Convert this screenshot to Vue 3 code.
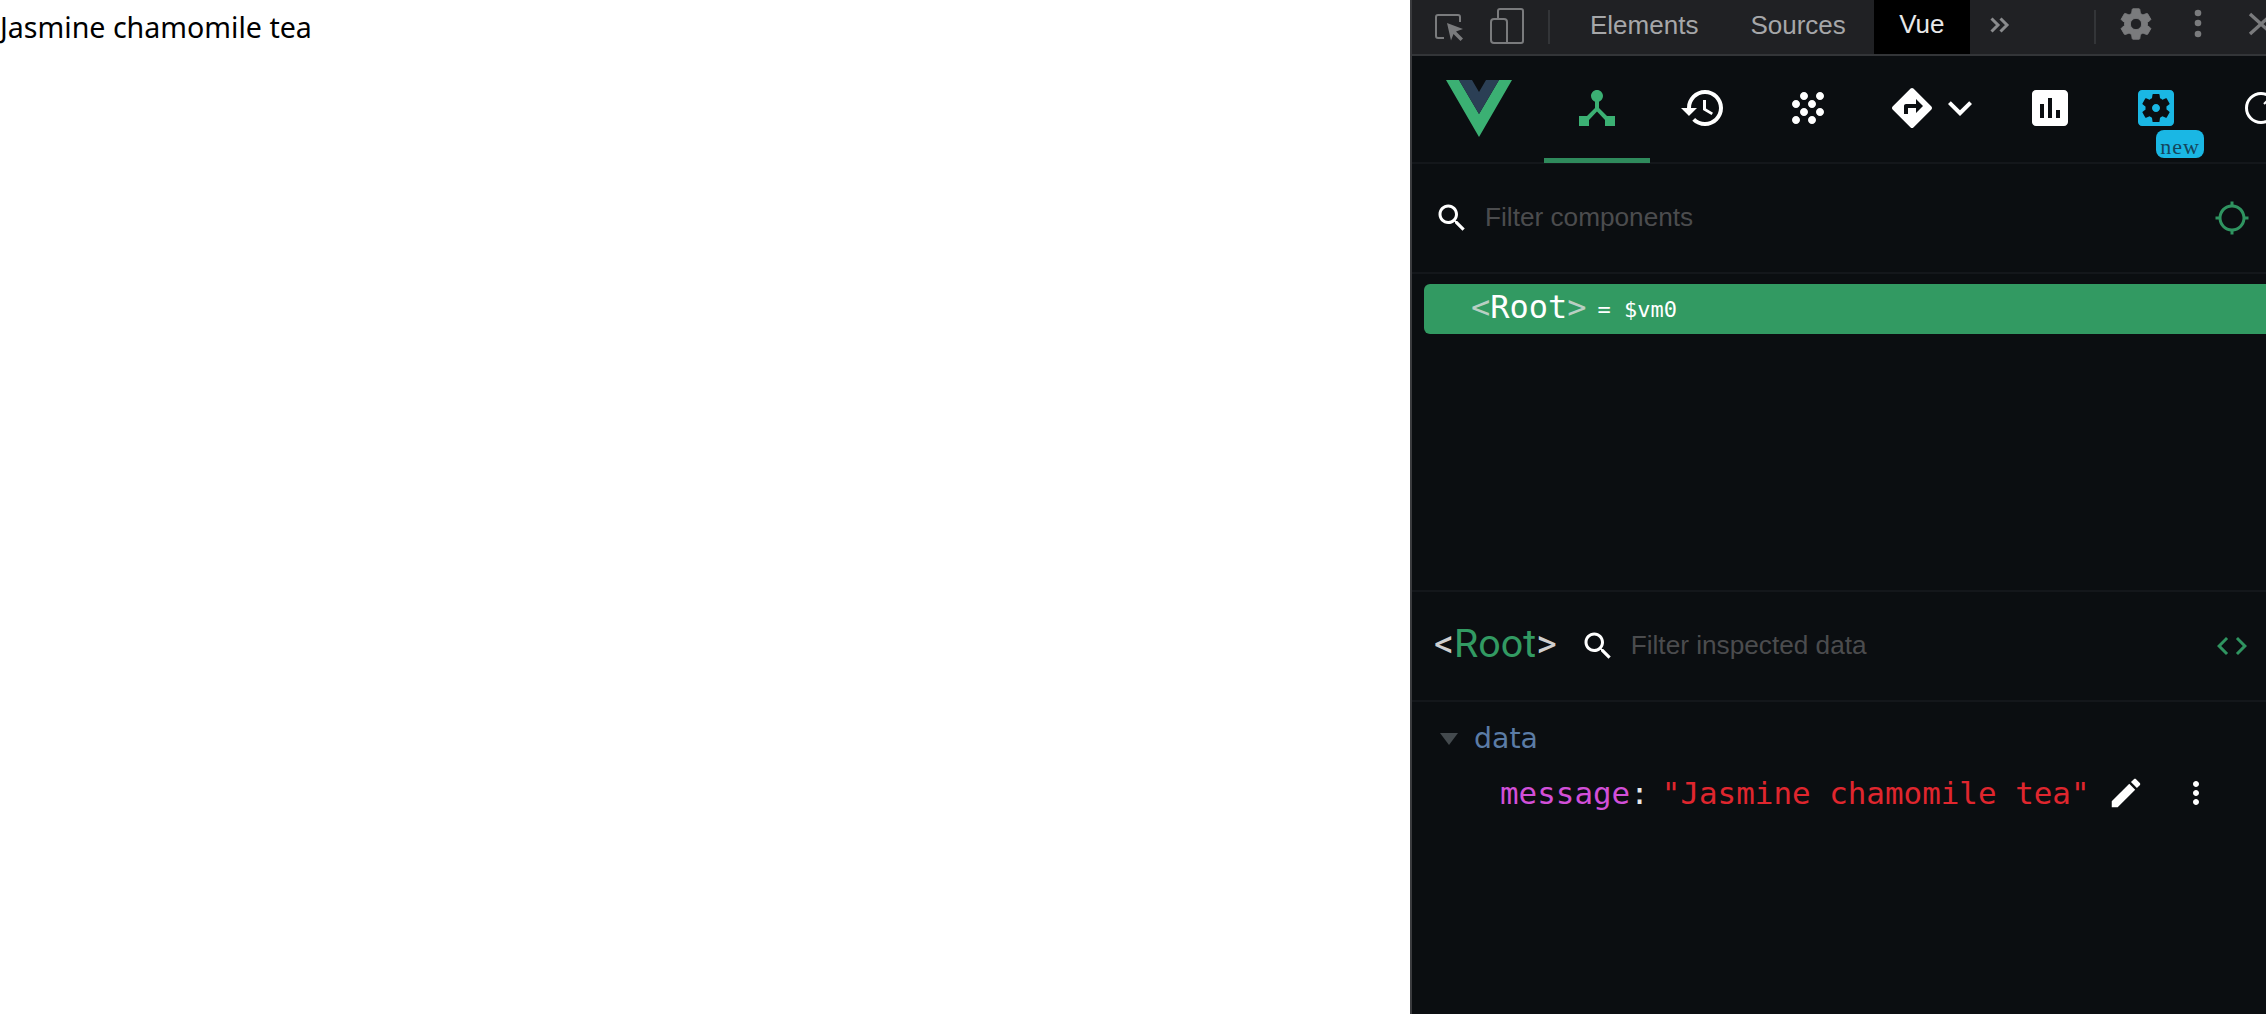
<script setup>
const icons = {
  hub: 'M17 16l-4-4V8.82C14.16 8.4 15 7.3 15 6c0-1.66-1.34-3-3-3S9 4.34 9 6c0 1.3.84 2.4 2 2.82V12l-4 4H3v5h5v-3.05l4-4.2 4 4.2V21h5v-5h-4z',
  history: 'M13 3c-4.97 0-9 4.03-9 9H1l3.89 3.89.07.14L9 12H6c0-3.87 3.13-7 7-7s7 3.13 7 7-3.13 7-7 7c-1.93 0-3.68-.79-4.94-2.06l-1.42 1.42C8.27 19.99 10.51 21 13 21c4.97 0 9-4.03 9-9s-4.03-9-9-9zm-1 5v5l4.28 2.54.72-1.21-3.5-2.08V8H12z',
  grain: 'M10 12c-1.1 0-2 .9-2 2s.9 2 2 2 2-.9 2-2-.9-2-2-2zM6 8c-1.1 0-2 .9-2 2s.9 2 2 2 2-.9 2-2-.9-2-2-2zm0 8c-1.1 0-2 .9-2 2s.9 2 2 2 2-.9 2-2-.9-2-2-2zm12-8c1.1 0 2-.9 2-2s-.9-2-2-2-2 .9-2 2 .9 2 2 2zm-4 8c-1.1 0-2 .9-2 2s.9 2 2 2 2-.9 2-2-.9-2-2-2zm4-4c-1.1 0-2 .9-2 2s.9 2 2 2 2-.9 2-2-.9-2-2-2zm-4-4c-1.1 0-2 .9-2 2s.9 2 2 2 2-.9 2-2-.9-2-2-2zm-4-4c-1.1 0-2 .9-2 2s.9 2 2 2 2-.9 2-2-.9-2-2-2z',
  directions: 'M21.71 11.29l-9-9c-.39-.39-1.02-.39-1.41 0l-9 9c-.39.39-.39 1.02 0 1.41l9 9c.39.39 1.02.39 1.41 0l9-9c.39-.38.39-1.01 0-1.41zM14 14.5V12h-4v3H8v-4c0-.55.45-1 1-1h5V7.5l3.5 3.5-3.5 3.5z',
  chevron: 'M7.41 8.59L12 13.17l4.59-4.58L18 10l-6 6-6-6z',
  chart: 'M19 3H5c-1.1 0-2 .9-2 2v14c0 1.1.9 2 2 2h14c1.1 0 2-.9 2-2V5c0-1.1-.9-2-2-2zM9 17H7v-7h2v7zm4 0h-2V7h2v10zm4 0h-2v-4h2v4z',
  settingsApp: 'M12 10c-1.1 0-2 .9-2 2s.9 2 2 2 2-.9 2-2-.9-2-2-2zm7-7H5c-1.11 0-2 .9-2 2v14c0 1.1.89 2 2 2h14c1.11 0 2-.9 2-2V5c0-1.1-.89-2-2-2zm-1.75 9c0 .23-.02.46-.05.68l1.48 1.16c.13.11.17.3.08.45l-1.4 2.42c-.09.15-.27.21-.43.15l-1.74-.7c-.36.28-.76.51-1.18.69l-.26 1.85c-.03.17-.18.3-.35.3h-2.8c-.17 0-.32-.13-.35-.29l-.26-1.85c-.43-.18-.82-.41-1.18-.69l-1.74.7c-.16.06-.34 0-.43-.15l-1.4-2.42c-.09-.15-.05-.34.08-.45l1.48-1.16c-.03-.23-.05-.46-.05-.69 0-.23.02-.46.05-.68l-1.48-1.16c-.13-.11-.17-.3-.08-.45l1.4-2.42c.09-.15.27-.21.43-.15l1.74.7c.36-.28.76-.51 1.18-.69l.26-1.85c.03-.17.18-.3.35-.3h2.8c.17 0 .32.13.35.29l.26 1.85c.43.18.82.41 1.18.69l1.74-.7c.16-.06.34 0 .43.15l1.4 2.42c.09.15.05.34-.08.45l-1.48 1.16c.03.23.05.46.05.69z',
  search: 'M15.5 14h-.79l-.28-.27C15.41 12.59 16 11.11 16 9.5 16 5.91 13.09 3 9.5 3S3 5.91 3 9.5 5.91 16 9.5 16c1.61 0 3.09-.59 4.23-1.57l.27.28v.79l5 4.99L20.49 19l-4.99-5zm-6 0C7.01 14 5 11.99 5 9.5S7.01 5 9.5 5 14 7.01 14 9.5 11.99 14 9.5 14z',
  target: 'M20.94 11c-.46-4.17-3.77-7.48-7.94-7.94V1h-2v2.06C6.83 3.52 3.52 6.83 3.06 11H1v2h2.06c.46 4.17 3.77 7.48 7.94 7.94V23h2v-2.06c4.17-.46 7.48-3.77 7.94-7.94H23v-2h-2.06zM12 19c-3.87 0-7-3.13-7-7s3.13-7 7-7 7 3.13 7 7-3.13 7-7 7z',
  code: 'M9.4 16.6L4.8 12l4.6-4.6L8 6l-6 6 6 6 1.4-1.4zm5.2 0l4.6-4.6-4.6-4.6L16 6l6 6-6 6-1.4-1.4z',
  edit: 'M3 17.25V21h3.75L17.81 9.94l-3.75-3.75L3 17.25zM20.71 7.04c.39-.39.39-1.02 0-1.41l-2.34-2.34c-.39-.39-1.02-.39-1.41 0l-1.83 1.83 3.75 3.75 1.83-1.83z',
  more: 'M12 8c1.1 0 2-.9 2-2s-.9-2-2-2-2 .9-2 2 .9 2 2 2zm0 2c-1.1 0-2 .9-2 2s.9 2 2 2 2-.9 2-2-.9-2-2-2zm0 6c-1.1 0-2 .9-2 2s.9 2 2 2 2-.9 2-2-.9-2-2-2z',
  gear: 'M19.14 12.94c.04-.3.06-.61.06-.94 0-.32-.02-.64-.07-.94l2.03-1.58c.18-.14.23-.41.12-.61l-1.92-3.32c-.12-.22-.37-.29-.59-.22l-2.39.96c-.5-.38-1.03-.7-1.62-.94l-.36-2.54c-.04-.24-.24-.41-.48-.41h-3.84c-.24 0-.43.17-.47.41l-.36 2.54c-.59.24-1.13.57-1.62.94l-2.39-.96c-.22-.08-.47 0-.59.22L2.74 8.87c-.12.21-.08.47.12.61l2.03 1.58c-.05.3-.09.63-.09.94s.02.64.07.94l-2.03 1.58c-.18.14-.23.41-.12.61l1.92 3.32c.12.22.37.29.59.22l2.39-.96c.5.38 1.03.7 1.62.94l.36 2.54c.05.24.24.41.48.41h3.84c.24 0 .44-.17.47-.41l.36-2.54c.59-.24 1.13-.56 1.62-.94l2.39.96c.22.08.47 0 .59-.22l1.92-3.32c.12-.22.07-.47-.12-.61l-2.01-1.58zM12 15.6c-1.98 0-3.6-1.62-3.6-3.6s1.62-3.6 3.6-3.6 3.6 1.62 3.6 3.6-1.62 3.6-3.6 3.6z'
}
</script>

<template>
  <div class="page">
    <main class="app-pane">Jasmine chamomile tea</main>

    <section class="devtools">
      <!-- chrome toolbar -->
      <header class="chrome-bar">
        <svg class="tool inspect" viewBox="0 0 30 30" width="30" height="30">
          <path d="M10 26H4a2 2 0 0 1-2-2V5a2 2 0 0 1 2-2h20a2 2 0 0 1 2 2v5" fill="none" stroke="currentColor" stroke-width="2" />
          <path d="M13 11l16 6-7 2.5 7 7-2.5 2.5-7-7-2.500 6.500z" fill="currentColor" />
        </svg>
        <svg class="tool device" viewBox="0 0 34 36" width="34" height="36">
          <path d="M8 10V3a2 2 0 0 1 2-2h21a2 2 0 0 1 2 2v30a2 2 0 0 1-2 2H4a3 3 0 0 1-3-3V14a3 3 0 0 1 3-3h10a3 3 0 0 1 3 3v21" fill="none" stroke="currentColor" stroke-width="2" />
        </svg>
        <span class="sep sep-a"></span>
        <span class="chrome-tab elements">Elements</span>
        <span class="chrome-tab sources">Sources</span>
        <span class="chrome-tab vue-tab">Vue</span>
        <svg class="more-tabs" viewBox="0 0 20 16" width="20" height="16">
          <path d="M1.500 1.500L8 8l-6.500 6.500M10.500 1.500L17 8l-6.500 6.500" fill="none" stroke="currentColor" stroke-width="3" />
        </svg>
        <span class="sep sep-b"></span>
        <svg class="tool gear" viewBox="0 0 24 24" width="38" height="38"><path :d="icons.gear" fill="currentColor" stroke="currentColor" stroke-width=".6" /></svg>
        <svg class="tool dots" viewBox="0 0 8 30" width="8" height="30">
          <circle cx="4" cy="4" r="3.300" fill="currentColor" />
          <circle cx="4" cy="14" r="3.300" fill="currentColor" />
          <circle cx="4" cy="25" r="3.300" fill="currentColor" />
        </svg>
        <svg class="tool close" viewBox="0 0 24 24" width="24" height="24">
          <path d="M2 2l22 20M24 2L2 22" stroke="currentColor" stroke-width="3.400" fill="none" />
        </svg>
      </header>

      <!-- vue devtools nav -->
      <nav class="vue-nav">
        <div class="logo-slot">
          <svg viewBox="0 0 66 57" width="66" height="57">
            <path d="M0 0h13l20 34L53 0h13L33 57z" fill="#3bb073" />
            <path d="M13 0h13l7 12 7-12h13L33 34z" fill="#2b3f55" />
          </svg>
        </div>
        <div class="nav-item active">
          <svg viewBox="0 0 24 24" width="48" height="48"><path :d="icons.hub" fill="#3bb073" /></svg>
        </div>
        <div class="nav-item">
          <svg viewBox="0 0 24 24" width="48" height="48"><path :d="icons.history" fill="#fff" /></svg>
        </div>
        <div class="nav-item grain">
          <svg viewBox="0 0 24 24" width="48" height="48"><path :d="icons.grain" fill="#fff" /></svg>
        </div>
        <div class="nav-item routing">
          <svg viewBox="0 0 24 24" width="48" height="48"><path :d="icons.directions" fill="#fff" /></svg>
          <svg viewBox="0 0 24 24" width="48" height="48"><path :d="icons.chevron" fill="#fff" /></svg>
        </div>
        <div class="nav-item">
          <svg viewBox="0 0 24 24" width="48" height="48"><path :d="icons.chart" fill="#fff" /></svg>
        </div>
        <div class="nav-item settings">
          <svg viewBox="0 0 24 24" width="48" height="48"><path :d="icons.settingsApp" fill="#1ab7e4" /></svg>
          <span class="badge">new</span>
        </div>
        <div class="nav-item">
          <svg viewBox="0 0 48 48" width="48" height="48">
            <circle cx="23" cy="24" r="14.500" fill="none" stroke="#fff" stroke-width="3" />
            <path d="M26 20l3-3" stroke="#fff" stroke-width="2" />
          </svg>
        </div>
      </nav>

      <!-- component tree -->
      <div class="search-row tree-search">
        <svg viewBox="0 0 24 24" width="36" height="36"><path :d="icons.search" fill="#fff" /></svg>
        <span class="placeholder">Filter components</span>
        <svg class="row-end" viewBox="0 0 24 24" width="36" height="36"><path :d="icons.target" fill="#2f9460" /></svg>
      </div>
      <div class="tree">
        <div class="tree-node">
          <span class="angle">&lt;</span><span class="node-name">Root</span><span class="angle">&gt;</span>
          <span class="vm-ref">= $vm0</span>
        </div>
      </div>

      <!-- inspector -->
      <div class="search-row inspector-head">
        <span class="title"><span class="bracket">&lt;</span><span class="title-name">Root</span><span class="bracket">&gt;</span></span>
        <svg viewBox="0 0 24 24" width="36" height="36"><path :d="icons.search" fill="#fff" /></svg>
        <span class="placeholder">Filter inspected data</span>
        <svg class="row-end" viewBox="0 0 24 24" width="36" height="36"><path :d="icons.code" fill="#2f9460" /></svg>
      </div>
      <div class="state">
        <div class="state-section">
          <span class="triangle"></span>
          <span class="section-name">data</span>
        </div>
        <div class="state-row">
          <span class="key">message</span><span class="colon">:</span>
          <span class="value">"Jasmine chamomile tea"</span>
          <svg class="edit" viewBox="0 0 24 24" width="38" height="38"><path :d="icons.edit" fill="#fff" /></svg>
          <svg class="kebab" viewBox="0 0 24 24" width="36" height="36"><path :d="icons.more" fill="#fff" /></svg>
        </div>
      </div>
    </section>
  </div>
</template>

<style scoped>
.page {
  display: flex;
  width: 2266px;
  height: 1014px;
  overflow: hidden;
  background: #fff;
}
.app-pane {
  width: 1410px;
  flex: none;
  padding-top: 7px;
  box-sizing: border-box;
  font: 28.6px/40px "Noto Sans", sans-serif;
  color: #000;
}
.devtools {
  flex: none;
  width: 856px;
  box-sizing: border-box;
  border-left: 2px solid #3a3b3e;
  background: #0b0e11;
  display: flex;
  flex-direction: column;
  font-family: "Liberation Sans", sans-serif;
  overflow: hidden;
}

/* chrome toolbar */
.chrome-bar {
  height: 56px;
  flex: none;
  box-sizing: border-box;
  border-bottom: 2px solid #333538;
  background: #202124;
  display: flex;
  align-items: center;
  color: #7a7b7d;
}
.tool { flex: none; }
.inspect { margin-left: 22px; }
.device { margin-left: 26px; margin-top: -2px; }
.sep { width: 2px; height: 34px; background: #333538; flex: none; }
.sep-a { margin-left: 24px; }
.chrome-tab {
  font-size: 26px;
  color: #a6a7a9;
  flex: none;
  margin-top: -3px;
}
.elements { margin-left: 40px; }
.sources { margin-left: 52px; }
.vue-tab {
  margin-left: 28px;
  margin-top: 0;
  width: 96px;
  height: 54px;
  line-height: 49px;
  text-align: center;
  background: #000;
  color: #e8e8e8;
}
.more-tabs { margin-left: 20px; margin-top: -4px; color: #8a8b8d; flex: none; }
.sep-b { margin-left: 84px; }
.gear { margin-left: 21px; margin-top: -6px; }
.dots { margin-left: 39px; margin-top: -6px; }
.close { margin-left: 46px; margin-top: -6px; }

/* vue nav */
.vue-nav {
  height: 108px;
  flex: none;
  box-sizing: border-box;
  border-bottom: 2px solid #14171b;
  display: flex;
}
.logo-slot {
  width: 132px;
  flex: none;
  box-sizing: border-box;
  padding: 24px 0 0 34px;
}
.logo-slot svg { display: block; }
.nav-item {
  position: relative;
  width: 106px;
  flex: none;
  box-sizing: border-box;
  display: flex;
  justify-content: center;
  padding-top: 28px;
}
.nav-item svg { display: block; flex: none; }
.nav-item.grain { width: 104px; }
.nav-item.active { border-bottom: 5px solid #2f8a5c; height: 107px; }
.nav-item.routing {
  width: 137px;
  justify-content: flex-start;
  padding-left: 28px;
}
.badge {
  position: absolute;
  left: 53px;
  top: 74px;
  width: 48px;
  height: 28px;
  border-radius: 8px;
  background: #1ab7e4;
  color: #14465c;
  font: 22px/33px "Liberation Serif", serif;
  letter-spacing: 1px;
  text-align: center;
  overflow: hidden;
}

/* filter rows */
.search-row {
  flex: none;
  height: 110px;
  box-sizing: border-box;
  display: flex;
  align-items: center;
  border-bottom: 2px solid #14171b;
}
.search-row svg { flex: none; }
.tree-search { padding: 0 16px 0 22px; }
.placeholder {
  font-size: 26.2px;
  color: #4b4c4e;
  margin-top: -2px;
}
.tree-search .placeholder { margin-left: 15px; }
.row-end { margin-left: auto; }

/* tree */
.tree {
  height: 318px;
  flex: none;
  box-sizing: border-box;
  border-bottom: 2px solid #14171b;
  padding: 10px 0 0 12px;
  font-family: "DejaVu Sans Mono", monospace;
}
.tree-node {
  height: 50px;
  box-sizing: border-box;
  padding-left: 47px;
  border-radius: 6px 0 0 6px;
  background: #329a62;
  color: #fff;
  font-size: 32px;
  line-height: 46px;
  display: flex;
  white-space: pre;
}
.angle { color: #b9cfc3; }
.vm-ref {
  font-size: 22px;
  line-height: 52px;
  margin-left: 11px;
}

/* inspector */
.inspector-head { padding: 0 16px 0 22px; }
.title {
  font: 39.4px/1 Roboto, sans-serif;
  margin-right: 23px;
  margin-top: -5px;
}
.bracket { color: #cfcfcf; }
.title-name { color: #329a62; }
.inspector-head .placeholder { margin-left: 15px; }
.state {
  flex: 1;
  padding-top: 20px;
  font-family: "DejaVu Sans Mono", monospace;
}
.state-section {
  display: flex;
  align-items: center;
  height: 34px;
  padding-left: 28px;
  font: 28.4px/34px "DejaVu Sans", sans-serif;
}
.triangle {
  width: 0;
  height: 0;
  border-left: 9px solid transparent;
  border-right: 9px solid transparent;
  border-top: 12px solid #444a4e;
}
.section-name {
  margin-left: 16px;
  color: #5b7ca6;
}
.state-row {
  display: flex;
  align-items: center;
  height: 44px;
  margin-top: 15px;
  padding-left: 88px;
  font-size: 30.9px;
  white-space: pre;
}
.key { color: #d24fd8; }
.colon { color: #e8e8e8; }
.value { color: #e0262e; margin-left: 13px; }
.edit { margin-left: 17px; flex: none; }
.kebab { margin-left: 33px; flex: none; }
</style>

<style>
html, body { margin: 0; background: #fff; }
</style>
